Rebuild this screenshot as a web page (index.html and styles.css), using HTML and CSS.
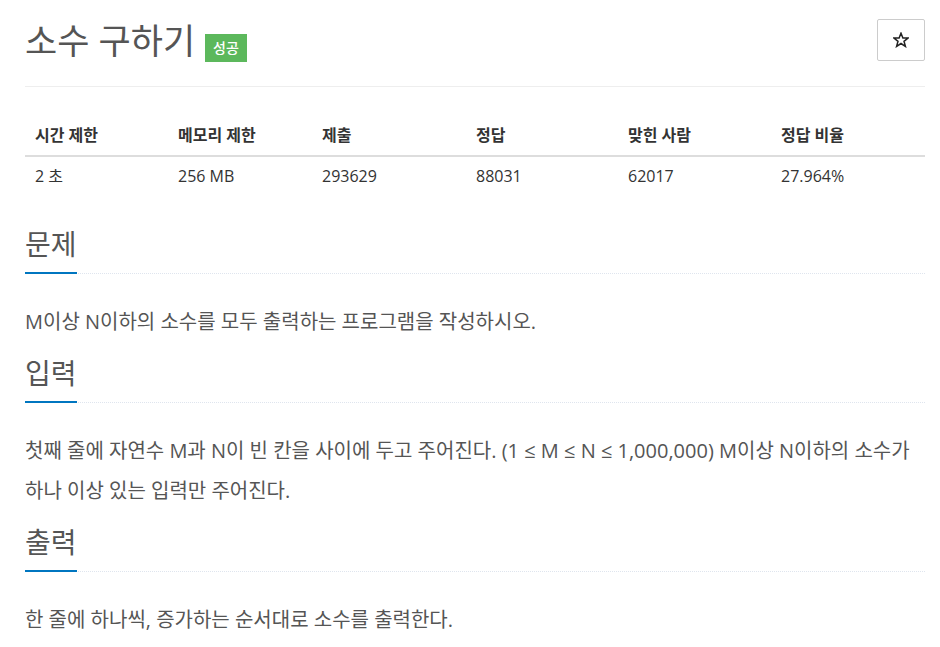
FILE: index.html
```html
<html>

    <head>
        <meta charset="utf-8">
        <title>소수 구하기</title>
        <link rel="stylesheet" href="styles.css">
    </head>

    <body>
        <div class="page-header">
            <h1 class="title">
                <span id="problem_title">소수 구하기</span>
                <span class="label-success">성공</span>
            </h1>
            <button class="star-btn" title="즐겨찾기">
                <svg width="16" height="16" viewBox="0 0 16 16">
                    <polygon points="8,1.2 9.9,6 15,6.1 11,9.3 12.4,14.4 8,11.5 3.6,14.4 5,9.3 1,6.1 6.1,6" fill="none" stroke="#222" stroke-width="1.5" stroke-linejoin="miter"/>
                </svg>
            </button>
        </div>

        <table class="problem-info">
            <colgroup>
                <col style="width: 143px">
                <col style="width: 144px">
                <col style="width: 154px">
                <col style="width: 152px">
                <col style="width: 153px">
                <col style="width: 154px">
            </colgroup>
            <thead>
                <tr>
                    <th>시간 제한</th>
                    <th>메모리 제한</th>
                    <th>제출</th>
                    <th>정답</th>
                    <th>맞힌 사람</th>
                    <th>정답 비율</th>
                </tr>
            </thead>
            <tbody>
                <tr>
                    <td>2 초</td>
                    <td>256 MB</td>
                    <td>293629</td>
                    <td>88031</td>
                    <td>62017</td>
                    <td>27.964%</td>
                </tr>
            </tbody>
        </table>

        <section class="problem-section" id="description">
            <div class="headline">
                <h2>문제</h2>
            </div>
            <div class="problem-text">
                <p>M이상 N이하의 소수를 모두 출력하는 프로그램을 작성하시오.</p>
            </div>
        </section>

        <section class="problem-section" id="input">
            <div class="headline">
                <h2>입력</h2>
            </div>
            <div class="problem-text">
                <p>첫째 줄에 자연수 M과 N이 빈 칸을 사이에 두고 주어진다. (1 ≤ M ≤ N ≤ 1,000,000) M이상 N이하의 소수가 하나 이상 있는 입력만 주어진다.</p>
            </div>
        </section>

        <section class="problem-section" id="output">
            <div class="headline">
                <h2>출력</h2>
            </div>
            <div class="problem-text">
                <p>한 줄에 하나씩, 증가하는 순서대로 소수를 출력한다.</p>
            </div>
        </section>
    </body>

</html>
```

FILE: styles.css
```css
body {
    font-family: "Open Sans", "Noto Sans CJK KR", sans-serif;
    color: #555;
    background-color: white;
    margin: 0;
    padding: 0 15px 0 25px;
}

.page-header {
    display: flex;
    justify-content: space-between;
    align-items: flex-start;
    padding: 19px 0 23px 0;
    border-bottom: 1px solid #eee;
}

.page-header .title {
    display: flex;
    align-items: flex-end;
    margin: 0;
    font-size: 35px;
    font-weight: normal;
    line-height: 44px;
    color: #555;
}

.page-header .label-success {
    margin: 0 0 1px 10px;
    padding: 0 8px;
    height: 28px;
    line-height: 28px;
    font-size: 14px;
    font-weight: 500;
    color: white;
    background-color: #5cb85c;
}

.star-btn {
    width: 48px;
    height: 42px;
    padding: 0;
    border: 1px solid #ccc;
    border-radius: 2px;
    background-color: white;
    display: flex;
    align-items: center;
    justify-content: center;
}

.problem-info {
    width: 100%;
    table-layout: fixed;
    border-collapse: collapse;
    margin: 30px 0 0 0;
    font-size: 16px;
    line-height: 22px;
}

.problem-info th {
    text-align: left;
    font-weight: bold;
    color: #333;
    padding: 7px 10px 9px 10px;
    border-bottom: 2px solid #ddd;
}

.problem-info td {
    color: #333;
    padding: 8px 10px;
}

.problem-section {
    margin-top: 12px;
}

#description {
    margin-top: 30px;
}

.headline {
    display: flex;
    border-bottom: 1px dotted #dfe5ee;
}

.headline h2 {
    margin: 0 0 -1px 0;
    padding-bottom: 9px;
    font-size: 28px;
    font-weight: normal;
    line-height: 38px;
    color: #555;
    border-bottom: 2px solid #0076c0;
}

.problem-text p {
    margin: 28px 0 0 0;
    font-size: 20px;
    line-height: 40px;
}
```
